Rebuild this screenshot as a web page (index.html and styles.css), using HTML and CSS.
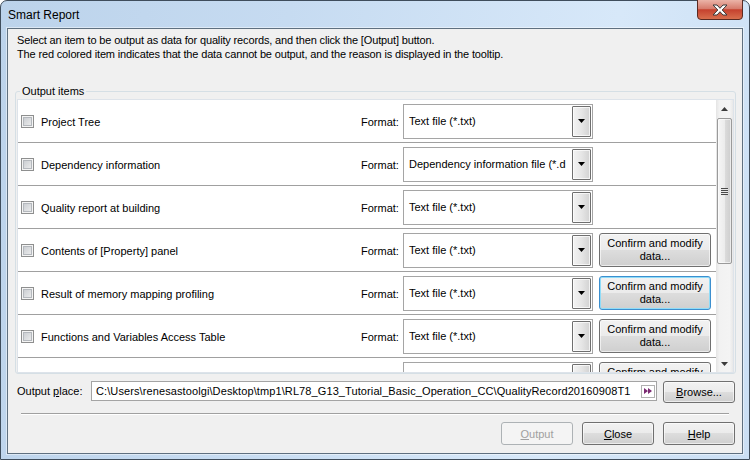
FILE: index.html
```html
<!DOCTYPE html>
<html>
<head>
<meta charset="utf-8">
<link rel="stylesheet" href="styles.css">
</head>
<body>
<div class="window">
  <div class="titlebar">
    <span class="title">Smart Report</span>
    <span class="close-btn">
      <svg width="46" height="20" viewBox="0 0 46 20">
        <defs>
          <linearGradient id="cg" x1="0" y1="0" x2="0" y2="1">
            <stop offset="0" stop-color="#ebb4a8"/>
            <stop offset="0.45" stop-color="#d67b6c"/>
            <stop offset="0.5" stop-color="#c5412e"/>
            <stop offset="1" stop-color="#d9714f"/>
          </linearGradient>
        </defs>
        <path d="M0.5 0V16a3.5 3.5 0 0 0 3.5 3.5H42a3.5 3.5 0 0 0 3.5-3.5V0" fill="url(#cg)" stroke="#5a2a22"/>
        <path d="M16 5h4l3 3.3 3-3.3h4l-4.8 5 4.8 5h-4l-3-3.3-3 3.3h-4l4.8-5z" fill="#fff" stroke="#3a3a3a" stroke-width="1" stroke-linejoin="round"/>
      </svg>
    </span>
  </div>
  <div class="client">
    <div class="desc">
      <p>Select an item to be output as data for quality records, and then click the [Output] button.</p>
      <p>The red colored item indicates that the data cannot be output, and the reason is displayed in the tooltip.</p>
    </div>
    <fieldset class="group">
      <legend>Output items</legend>
      <div class="panel">
        <div class="rows">
          <div class="row">
            <span class="cb"></span>
            <span class="label">Project Tree</span>
            <span class="fmt">Format:</span>
            <span class="combo"><span class="combo-text">Text file (*.txt)</span><span class="combo-btn"><svg width="7" height="4"><path d="M0 0h7L3.5 4z" fill="#000"/></svg></span></span>
            <span class="slot"></span>
          </div>
          <div class="row">
            <span class="cb"></span>
            <span class="label">Dependency information</span>
            <span class="fmt">Format:</span>
            <span class="combo"><span class="combo-text">Dependency information file (*.d</span><span class="combo-btn"><svg width="7" height="4"><path d="M0 0h7L3.5 4z" fill="#000"/></svg></span></span>
            <span class="slot"></span>
          </div>
          <div class="row">
            <span class="cb"></span>
            <span class="label">Quality report at building</span>
            <span class="fmt">Format:</span>
            <span class="combo"><span class="combo-text">Text file (*.txt)</span><span class="combo-btn"><svg width="7" height="4"><path d="M0 0h7L3.5 4z" fill="#000"/></svg></span></span>
            <span class="slot"></span>
          </div>
          <div class="row">
            <span class="cb"></span>
            <span class="label">Contents of [Property] panel</span>
            <span class="fmt">Format:</span>
            <span class="combo"><span class="combo-text">Text file (*.txt)</span><span class="combo-btn"><svg width="7" height="4"><path d="M0 0h7L3.5 4z" fill="#000"/></svg></span></span>
            <span class="slot"><button class="btn confirm">Confirm and modify<br>data...</button></span>
          </div>
          <div class="row">
            <span class="cb"></span>
            <span class="label">Result of memory mapping profiling</span>
            <span class="fmt">Format:</span>
            <span class="combo"><span class="combo-text">Text file (*.txt)</span><span class="combo-btn"><svg width="7" height="4"><path d="M0 0h7L3.5 4z" fill="#000"/></svg></span></span>
            <span class="slot"><button class="btn confirm focus">Confirm and modify<br>data...</button></span>
          </div>
          <div class="row">
            <span class="cb"></span>
            <span class="label">Functions and Variables Access Table</span>
            <span class="fmt">Format:</span>
            <span class="combo"><span class="combo-text">Text file (*.txt)</span><span class="combo-btn"><svg width="7" height="4"><path d="M0 0h7L3.5 4z" fill="#000"/></svg></span></span>
            <span class="slot"><button class="btn confirm">Confirm and modify<br>data...</button></span>
          </div>
          <div class="row">
            <span class="cb"></span>
            <span class="label"></span>
            <span class="fmt"></span>
            <span class="combo"><span class="combo-text"></span><span class="combo-btn"><svg width="7" height="4"><path d="M0 0h7L3.5 4z" fill="#000"/></svg></span></span>
            <span class="slot"><button class="btn confirm">Confirm and modify<br>data...</button></span>
          </div>
        </div>
        <div class="scrollbar">
          <div class="sb-btn"><svg width="7" height="4"><path d="M0 4h7L3.5 0z" fill="#3c3c3c"/></svg></div>
          <div class="sb-track">
            <div class="thumb"><span class="grip"></span></div>
          </div>
          <div class="sb-btn"><svg width="7" height="4"><path d="M0 0h7L3.5 4z" fill="#3c3c3c"/></svg></div>
        </div>
      </div>
    </fieldset>
    <div class="place-row">
      <span class="place-label">Output <u>p</u>lace:</span>
      <span class="path">
        <span class="path-text">C:\Users\renesastoolgi\Desktop\tmp1\RL78_G13_Tutorial_Basic_Operation_CC\QualityRecord20160908T1</span>
        <span class="path-btn"><svg width="8" height="6"><path d="M0 0l4 3 -4 3zM4 0l4 3 -4 3z" fill="#7b2a72"/></svg></span>
      </span>
      <button class="btn browse"><u>B</u>rowse...</button>
    </div>
    <div class="sep"></div>
    <div class="actions">
      <button class="btn action disabled"><u>O</u>utput</button>
      <button class="btn action"><u>C</u>lose</button>
      <button class="btn action"><u>H</u>elp</button>
    </div>
  </div>
</div>
</body>
</html>
```
FILE: styles.css
```css
html, body {
  margin: 0;
  padding: 0;
  background: #ffffff;
}
body {
  font-family: "Liberation Sans", Arial, sans-serif;
  font-size: 11px;
  color: #000;
}
.window {
  width: 750px;
  height: 460px;
  box-sizing: border-box;
  border: 1px solid #3f4d5c;
  border-radius: 7px 7px 0 0;
  background: linear-gradient(100deg, #bcd3eb 0%, #c6dbf1 35%, #d7e8f9 75%, #cbdff4 100%);
  padding: 0 6px 5px 6px;
  display: flex;
  flex-direction: column;
}
.titlebar {
  height: 27px;
  display: flex;
  justify-content: space-between;
  align-items: flex-start;
  flex-shrink: 0;
}
.title {
  margin: 6px 0 0 1px;
  font-size: 12px;
  line-height: 16px;
  color: #000;
}
.close-btn {
  display: block;
  width: 46px;
  height: 20px;
  margin-top: -1px;
}
.close-btn svg { display: block; }
.client {
  flex: 1;
  border: 1px solid #5f7080;
  box-shadow: 0 0 0 1px rgba(255,255,255,0.45);
  background: #f0f0f0;
  display: flex;
  flex-direction: column;
  min-height: 0;
}
.desc {
  padding: 4px 0 0 9px;
  line-height: 14px;
  letter-spacing: -0.15px;
}
.desc p { margin: 0; white-space: nowrap; }

.group {
  margin: 24px 6px 0 7px;
  padding: 1px 1px 0 1px;
  border: 1px solid #d5dfe5;
  border-radius: 3px;
  min-width: 0;
}
.group legend {
  margin-left: 3px;
  padding: 0 2px;
  line-height: 13px;
}
.panel {
  height: 274px;
  box-sizing: border-box;
  border: 1px solid #dde3ea;
  background: #fff;
  display: flex;
}
.rows {
  flex: 1;
  overflow: hidden;
  display: flex;
  flex-direction: column;
}
.row {
  height: 42px;
  flex-shrink: 0;
  border-bottom: 1px solid #a0a0a0;
  display: flex;
  align-items: center;
  padding: 0 5px 0 3px;
}
.cb {
  width: 13px;
  height: 13px;
  box-sizing: border-box;
  border: 1px solid #8e8f8f;
  background: linear-gradient(135deg, #c3c7cc, #f2f2f2);
  box-shadow: inset 0 0 0 1px #f4f4f4, inset 0 0 0 2px #b4b8bd;
  margin-right: 7px;
  flex-shrink: 0;
}
.label {
  flex: 1;
  white-space: nowrap;
  line-height: 14px;
  padding-top: 1px;
}
.fmt {
  width: 42px;
  line-height: 14px;
  padding-top: 1px;
}
.combo {
  width: 190px;
  height: 35px;
  box-sizing: border-box;
  border: 1px solid #a5a5a5;
  background: #fff;
  display: flex;
  align-items: stretch;
}
.combo-text {
  flex: 1;
  overflow: hidden;
  white-space: nowrap;
  padding-left: 5px;
  display: flex;
  align-items: center;
}
.combo-btn {
  width: 19px;
  box-sizing: border-box;
  margin: 1px 1px 1px 0;
  border: 1px solid #6f6f6f;
  border-radius: 1px;
  background: linear-gradient(90deg, #f3f3f3 0%, #e6e6e6 50%, #d2d2d2 100%);
  box-shadow: inset 0 0 0 1px rgba(255,255,255,0.7);
  display: flex;
  align-items: center;
  justify-content: center;
}
.combo-btn svg { display: block; }
.slot {
  width: 112px;
  margin-left: 6px;
  display: flex;
}

.btn {
  box-sizing: border-box;
  border: 1px solid #707070;
  border-radius: 3px;
  background: linear-gradient(#f2f2f2 0%, #ebebeb 49%, #dddddd 50%, #cfcfcf 100%);
  box-shadow: inset 0 0 0 1px rgba(255,255,255,0.6);
  font-family: "Liberation Sans", Arial, sans-serif;
  font-size: 11px;
  color: #000;
  padding: 0;
  margin: 0;
  display: flex;
  align-items: center;
  justify-content: center;
  text-align: center;
}
.confirm {
  width: 112px;
  height: 34px;
  line-height: 13px;
}
.confirm.focus {
  border-color: #3c8fcf;
  box-shadow: inset 0 0 0 1px #8fdcf8;
}

.scrollbar {
  width: 17px;
  display: flex;
  flex-direction: column;
  background: linear-gradient(90deg, #e4e4e4 0%, #f2f2f2 20%, #f4f4f4 80%, #e8e8e8 100%);
}
.sb-btn {
  height: 17px;
  display: flex;
  align-items: center;
  justify-content: center;
  flex-shrink: 0;
}
.sb-btn svg { display: block; }
.sb-track {
  flex: 1;
  padding: 1px 1px 0 1px;
}
.thumb {
  height: 146px;
  box-sizing: border-box;
  border: 1px solid #9a9a9a;
  border-radius: 2px;
  background: linear-gradient(90deg, #f6f6f6 0%, #ececec 50%, #dcdcdc 52%, #cdcdcd 100%);
  box-shadow: inset 0 0 0 1px rgba(255,255,255,0.6);
  display: flex;
  align-items: center;
  justify-content: center;
}
.grip {
  width: 7px;
  height: 7px;
  background: repeating-linear-gradient(180deg, #4a4a4a 0 1px, #e8e8e8 1px 2px);
}

.place-row {
  display: flex;
  align-items: flex-start;
  margin-top: 7px;
  padding: 0 7px 0 9px;
  height: 22px;
}
.place-label {
  width: 74px;
  line-height: 20px;
  white-space: nowrap;
}
.path {
  width: 566px;
  height: 20px;
  box-sizing: border-box;
  border: 1px solid #a4a4a4;
  background: #fff;
  display: flex;
  align-items: center;
  padding: 0 1px 0 4px;
  margin-right: 6px;
}
.path-text {
  flex: 1;
  overflow: hidden;
  white-space: nowrap;
  letter-spacing: 0.1px;
}
.path-btn {
  width: 14px;
  height: 13px;
  box-sizing: border-box;
  border: 1px solid #b0b0b0;
  background: #fff;
  display: flex;
  align-items: center;
  justify-content: center;
  margin-left: 8px;
}
.path-btn svg { display: block; }
.browse {
  width: 72px;
  height: 22px;
}
.sep {
  margin: 10px 13px 0 13px;
  border-top: 1px solid #a0a0a0;
  border-bottom: 1px solid #ffffff;
}
.actions {
  display: flex;
  justify-content: flex-end;
  gap: 9px;
  margin-top: 7px;
  padding-right: 7px;
}
.action {
  width: 72px;
  height: 23px;
}
.action.disabled {
  border-color: #adb2b5;
  background: #f4f4f4;
  box-shadow: none;
  color: #a0a0a0;
}
```
